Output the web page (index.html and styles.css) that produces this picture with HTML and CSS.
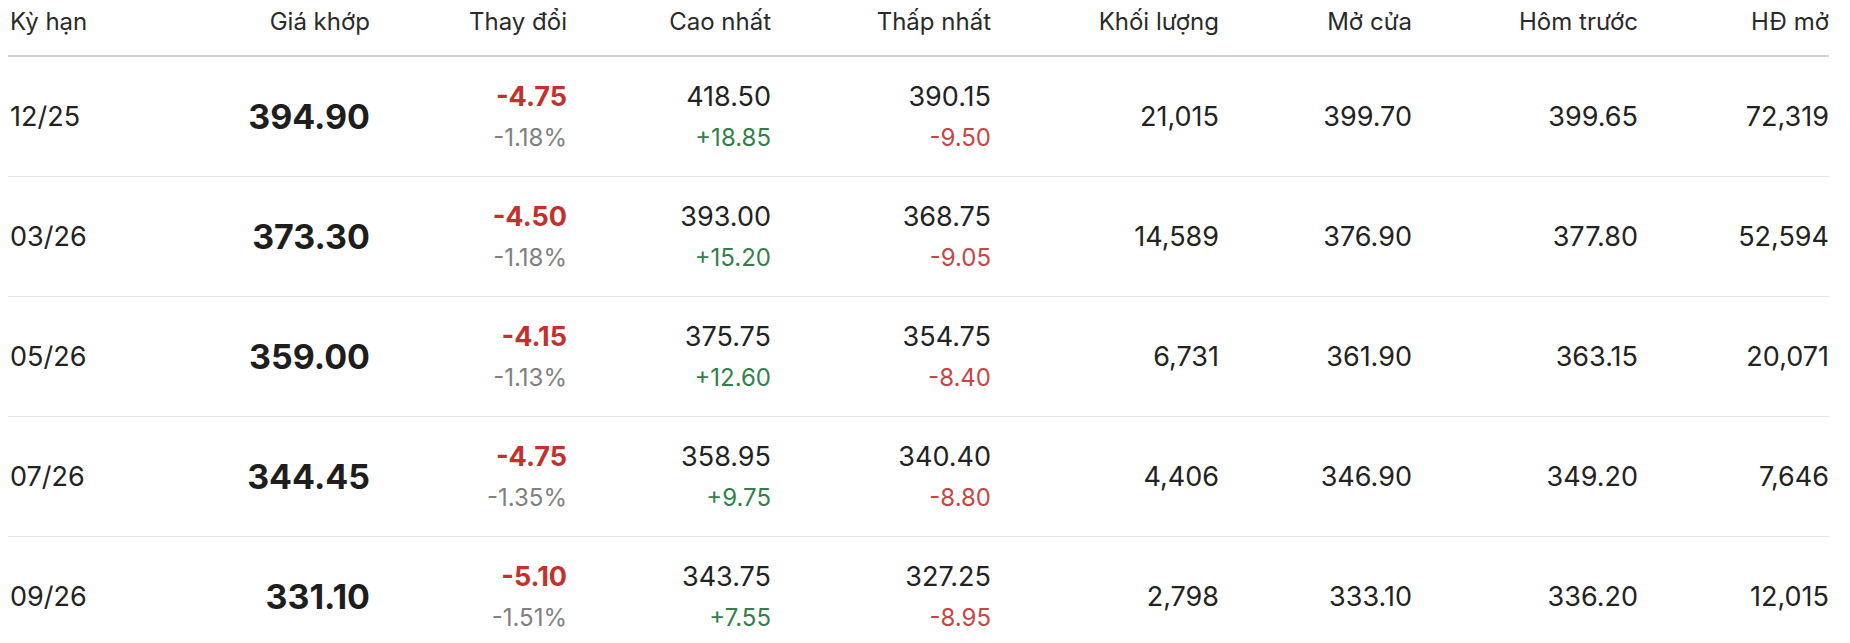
FILE: index.html
```html
<!DOCTYPE html>
<html lang="vi">
<head>
<meta charset="utf-8">
<title>Kỳ hạn</title>
<link rel="stylesheet" href="styles.css">
</head>
<body>
<div class="table">
  <div class="row head">
    <div class="c left">Kỳ hạn</div>
    <div class="c">Giá khớp</div>
    <div class="c">Thay đổi</div>
    <div class="c">Cao nhất</div>
    <div class="c">Thấp nhất</div>
    <div class="c">Khối lượng</div>
    <div class="c">Mở cửa</div>
    <div class="c">Hôm trước</div>
    <div class="c">HĐ mở</div>
  </div>

  <div class="row">
    <div class="c left">12/25</div>
    <div class="c big">394.90</div>
    <div class="c"><div class="stack"><span class="chg">-4.75</span><span class="pct">-1.18%</span></div></div>
    <div class="c"><div class="stack"><span class="val">418.50</span><span class="up">+18.85</span></div></div>
    <div class="c"><div class="stack"><span class="val">390.15</span><span class="dn">-9.50</span></div></div>
    <div class="c">21,015</div>
    <div class="c">399.70</div>
    <div class="c">399.65</div>
    <div class="c">72,319</div>
  </div>

  <div class="row">
    <div class="c left">03/26</div>
    <div class="c big">373.30</div>
    <div class="c"><div class="stack"><span class="chg">-4.50</span><span class="pct">-1.18%</span></div></div>
    <div class="c"><div class="stack"><span class="val">393.00</span><span class="up">+15.20</span></div></div>
    <div class="c"><div class="stack"><span class="val">368.75</span><span class="dn">-9.05</span></div></div>
    <div class="c">14,589</div>
    <div class="c">376.90</div>
    <div class="c">377.80</div>
    <div class="c">52,594</div>
  </div>

  <div class="row">
    <div class="c left">05/26</div>
    <div class="c big">359.00</div>
    <div class="c"><div class="stack"><span class="chg">-4.15</span><span class="pct">-1.13%</span></div></div>
    <div class="c"><div class="stack"><span class="val">375.75</span><span class="up">+12.60</span></div></div>
    <div class="c"><div class="stack"><span class="val">354.75</span><span class="dn">-8.40</span></div></div>
    <div class="c">6,731</div>
    <div class="c">361.90</div>
    <div class="c">363.15</div>
    <div class="c">20,071</div>
  </div>

  <div class="row">
    <div class="c left">07/26</div>
    <div class="c big">344.45</div>
    <div class="c"><div class="stack"><span class="chg">-4.75</span><span class="pct">-1.35%</span></div></div>
    <div class="c"><div class="stack"><span class="val">358.95</span><span class="up">+9.75</span></div></div>
    <div class="c"><div class="stack"><span class="val">340.40</span><span class="dn">-8.80</span></div></div>
    <div class="c">4,406</div>
    <div class="c">346.90</div>
    <div class="c">349.20</div>
    <div class="c">7,646</div>
  </div>

  <div class="row">
    <div class="c left">09/26</div>
    <div class="c big">331.10</div>
    <div class="c"><div class="stack"><span class="chg">-5.10</span><span class="pct">-1.51%</span></div></div>
    <div class="c"><div class="stack"><span class="val">343.75</span><span class="up">+7.55</span></div></div>
    <div class="c"><div class="stack"><span class="val">327.25</span><span class="dn">-8.95</span></div></div>
    <div class="c">2,798</div>
    <div class="c">333.10</div>
    <div class="c">336.20</div>
    <div class="c">12,015</div>
  </div>
</div>
</body>
</html>
```

FILE: styles.css
```css
html, body {
  margin: 0;
  padding: 0;
  background: #ffffff;
}
body {
  font-family: Inter, "Noto Sans", "Liberation Sans", sans-serif;
  color: #222222;
  overflow: hidden;
}
.table {
  margin-left: 8px;
  padding-right: 21px;
}
.row {
  display: grid;
  grid-template-columns: 162px 200px 197px 204px 220px 228px 193px 226px 191px;
  height: 119px;
  border-bottom: 1px solid #e2e6e9;
  align-items: center;
  font-size: 27px;
}
.row.head {
  height: 57px;
  border-bottom: 2px solid #cdd2d6;
  align-items: start;
  padding-top: 7px;
  box-sizing: border-box;
  font-size: 24px;
  color: #2a2a2a;
}
.c {
  text-align: right;
  line-height: 30px;
  white-space: nowrap;
}
.c.left {
  text-align: left;
  padding-left: 2px;
}
.big {
  font-size: 34px;
  font-weight: 700;
  color: #1e1e1e;
}
.stack {
  display: flex;
  flex-direction: column;
  align-items: flex-end;
  gap: 11px;
}
.stack .val,
.stack .chg {
  line-height: 32px;
}
.chg {
  color: #c4302b;
  font-weight: 700;
}
.pct,
.up,
.dn {
  font-size: 24px;
  line-height: 28px;
}
.pct {
  color: #808080;
}
.up {
  color: #327f4c;
}
.dn {
  color: #c94444;
}
```
